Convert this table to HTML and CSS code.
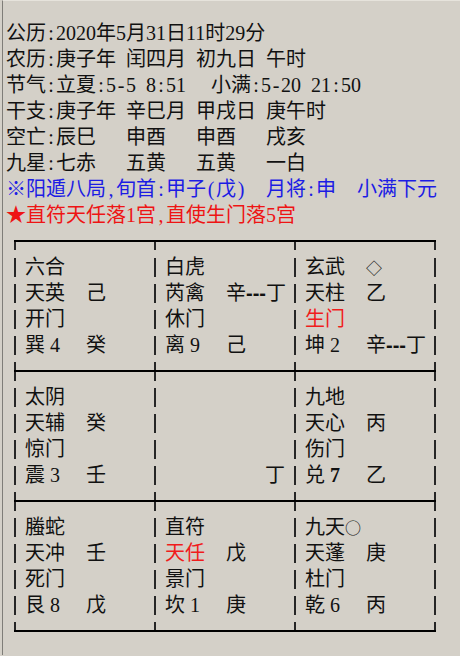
FILE: index.html
```html
<!DOCTYPE html>
<html lang="zh-CN">
<head>
<meta charset="utf-8">
<title>奇门排盘</title>
<link rel="stylesheet" href="styles.css">
</head>
<body>
<div class="win">
  <div class="info">
    <div class="line">公历<span class="hw">:</span>2020年5月31日11时29分</div>
    <div class="line"><span class="lab">农历<span class="hw">:</span></span><span class="col">庚子年</span><span class="col">闰四月</span><span class="col">初九日</span><span>午时</span></div>
    <div class="line"><span class="lab">节气<span class="hw">:</span></span><span class="term">立夏<span class="hw">:</span>5<span class="hw">-</span>5<span class="hw"></span>8<span class="hw">:</span>51</span><span>小满<span class="hw">:</span>5<span class="hw">-</span>20<span class="hw"></span>21<span class="hw">:</span>50</span></div>
    <div class="line"><span class="lab">干支<span class="hw">:</span></span><span class="col">庚子年</span><span class="col">辛巳月</span><span class="col">甲戌日</span><span>庚午时</span></div>
    <div class="line"><span class="lab">空亡<span class="hw">:</span></span><span class="col">辰巳</span><span class="col">申酉</span><span class="col">申酉</span><span>戌亥</span></div>
    <div class="line"><span class="lab">九星<span class="hw">:</span></span><span class="col">七赤</span><span class="col">五黄</span><span class="col">五黄</span><span>一白</span></div>
    <div class="line blue"><span class="ju">※阳遁八局<span class="hw">,</span>旬首<span class="hw">:</span>甲子<span class="hw">(</span>戊<span class="hw">)</span></span><span class="yj">月将<span class="hw">:</span>申</span><span>小满下元</span></div>
    <div class="line red">★直符天任落1宫<span class="hw">,</span>直使生门落5宫</div>
  </div>

  <div class="board">
    <!-- row 1 -->
    <div class="cell">
      <div class="ln"><span class="k">六合</span></div>
      <div class="ln"><span class="k">天英</span><span>己</span></div>
      <div class="ln"><span class="k">开门</span></div>
      <div class="ln"><span class="k">巽<span class="num">4</span></span><span>癸</span></div>
    </div>
    <div class="cell">
      <div class="ln"><span class="k">白虎</span></div>
      <div class="ln"><span class="k">芮禽</span><span>辛<span class="dash">---</span>丁</span></div>
      <div class="ln"><span class="k">休门</span></div>
      <div class="ln"><span class="k">离<span class="num">9</span></span><span>己</span></div>
    </div>
    <div class="cell">
      <div class="ln"><span class="k">玄武</span><span class="sym">◇</span></div>
      <div class="ln"><span class="k">天柱</span><span>乙</span></div>
      <div class="ln"><span class="k hot">生门</span></div>
      <div class="ln"><span class="k">坤<span class="num">2</span></span><span>辛<span class="dash">---</span>丁</span></div>
    </div>
    <!-- row 2 -->
    <div class="cell">
      <div class="ln"><span class="k">太阴</span></div>
      <div class="ln"><span class="k">天辅</span><span>癸</span></div>
      <div class="ln"><span class="k">惊门</span></div>
      <div class="ln"><span class="k">震<span class="num">3</span></span><span>壬</span></div>
    </div>
    <div class="cell">
      <div class="ln"></div>
      <div class="ln"></div>
      <div class="ln"></div>
      <div class="ln"><span class="far">丁</span></div>
    </div>
    <div class="cell">
      <div class="ln"><span class="k">九地</span></div>
      <div class="ln"><span class="k">天心</span><span>丙</span></div>
      <div class="ln"><span class="k">伤门</span></div>
      <div class="ln"><span class="k">兑<b class="num">7</b></span><span>乙</span></div>
    </div>
    <!-- row 3 -->
    <div class="cell">
      <div class="ln"><span class="k">螣蛇</span></div>
      <div class="ln"><span class="k">天冲</span><span>壬</span></div>
      <div class="ln"><span class="k">死门</span></div>
      <div class="ln"><span class="k">艮<span class="num">8</span></span><span>戊</span></div>
    </div>
    <div class="cell">
      <div class="ln"><span class="k">直符</span></div>
      <div class="ln"><span class="k hot">天任</span><span>戊</span></div>
      <div class="ln"><span class="k">景门</span></div>
      <div class="ln"><span class="k">坎<span class="num">1</span></span><span>庚</span></div>
    </div>
    <div class="cell">
      <div class="ln"><span class="k">九天<span class="sym">○</span></span></div>
      <div class="ln"><span class="k">天蓬</span><span>庚</span></div>
      <div class="ln"><span class="k">杜门</span></div>
      <div class="ln"><span class="k">乾<span class="num">6</span></span><span>丙</span></div>
    </div>
  </div>
</div>
</body>
</html>
```

FILE: styles.css
```css
html, body {
  margin: 0;
  padding: 0;
  background: #d4d0c8;
}

body {
  font-family: "Liberation Serif", "Noto Sans CJK SC", sans-serif;
  font-size: 20px;
  color: #111;
}

.win {
  margin-left: 2px;
  border-left: 1px solid #7f7d78;
  border-top: 1px solid #e6e3dc;
  min-height: 655px;
  padding-top: 19px;
  box-sizing: border-box;
}

.info {
  padding-left: 3px;
}

.line {
  height: 26px;
  line-height: 26px;
  white-space: nowrap;
}

.hw {
  display: inline-block;
  width: 10px;
  text-align: center;
}

.lab {
  display: inline-block;
  width: 50px;
}

.col {
  display: inline-block;
  width: 70px;
}

.term {
  display: inline-block;
  width: 155px;
}

.ju {
  display: inline-block;
  width: 260px;
}

.yj {
  display: inline-block;
  width: 91px;
}

.blue {
  color: #1c1ce4;
}

.red {
  color: #ee1414;
}

.board {
  margin: 12px 0 0 11px;
  width: 422px;
  display: grid;
  grid-template-columns: 140px 140px 142px;
  border-bottom: 2px solid #000;
  background-image:
    repeating-linear-gradient(to bottom, #262626 0 10.5px, transparent 10.5px 17.5px, #262626 17.5px 26px),
    repeating-linear-gradient(to bottom, #262626 0 10.5px, transparent 10.5px 17.5px, #262626 17.5px 26px),
    repeating-linear-gradient(to bottom, #262626 0 10.5px, transparent 10.5px 17.5px, #262626 17.5px 26px),
    repeating-linear-gradient(to bottom, #262626 0 10.5px, transparent 10.5px 17.5px, #262626 17.5px 26px);
  background-size: 2px 100%;
  background-position: 0 0, 140px 0, 280px 0, 420px 0;
  background-repeat: no-repeat;
}

.cell {
  border-top: 2px solid #000;
  padding: 12px 0 12px 11px;
}

.ln {
  height: 26px;
  line-height: 26px;
  display: flex;
  white-space: nowrap;
}

.k {
  width: 61px;
  flex: none;
}

.num {
  margin-left: 5px;
}

b.num {
  font-weight: bold;
}

.dash {
  font-family: "Liberation Sans", sans-serif;
  font-weight: bold;
}

.sym {
  font-family: "Noto Sans CJK SC", sans-serif;
  font-size: 16px;
}

.hot {
  color: #f01c1c;
}

.far {
  margin-left: 100px;
}
```
